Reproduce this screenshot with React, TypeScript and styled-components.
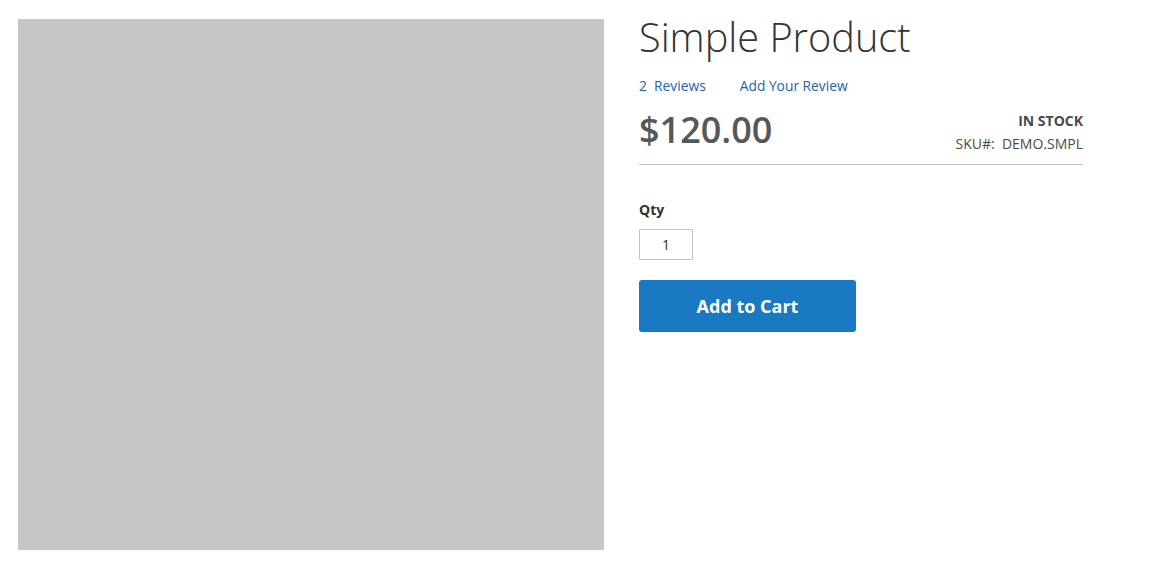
import React from "react";
import styled, { createGlobalStyle } from "styled-components";

const Global = createGlobalStyle`
  html, body { margin: 0; padding: 0; background: #fff; }
  body { font-family: "Open Sans", "Noto Sans", sans-serif; color: #333; }
`;

const Page = styled.div`
  display: flex;
  align-items: flex-start;
  padding: 19px 0 0 18px;
  gap: 35px;
`;

const Gallery = styled.div`
  width: 586px;
  height: 531px;
  background: #c6c6c6;
  flex-shrink: 0;
`;

const Info = styled.div`
  width: 444px;
  display: flex;
  flex-direction: column;
`;

const Title = styled.h1`
  margin: 0;
  font-weight: 300;
  font-size: 39.7px;
  line-height: 40px;
  color: #333;
  margin-top: -2px;
`;

const Reviews = styled.div`
  display: flex;
  gap: 34px;
  margin-top: 19px;
  font-size: 13.8px;
  line-height: 20px;
`;

const Link = styled.a`
  color: #1f62ad;
  text-decoration: none;
  white-space: pre;
`;

const PriceRow = styled.div`
  display: flex;
  justify-content: space-between;
  align-items: flex-start;
  margin-top: 14px;
  padding-bottom: 9px;
  border-bottom: 1px solid #c1c1c1;
`;

const Price = styled.div`
  font-size: 36px;
  font-weight: 600;
  color: #575757;
  line-height: 40px;
`;

const Stock = styled.div`
  display: flex;
  flex-direction: column;
  align-items: flex-end;
  font-size: 14px;
  line-height: 22px;
  color: #4a4a4a;
`;

const StockStatus = styled.div`
  font-weight: 700;
  text-transform: uppercase;
`;

const Sku = styled.div`
  white-space: pre;
  margin-top: 1px;
`;

const QtyLabel = styled.label`
  display: block;
  margin-top: 35px;
  font-size: 14px;
  font-weight: 700;
  line-height: 20px;
  color: #333;
`;

const QtyInput = styled.input`
  box-sizing: border-box;
  width: 54px;
  height: 31px;
  margin-top: 9px;
  border: 1px solid #c2c2c2;
  border-radius: 1px;
  text-align: center;
  font-family: "Open Sans", sans-serif;
  font-size: 14px;
  color: #333;
  padding: 0;
  outline: none;
`;

const CartButton = styled.button`
  width: 217px;
  height: 52px;
  margin-top: 20px;
  background: #1979c3;
  border: none;
  border-radius: 3px;
  color: #fff;
  font-family: "Open Sans", sans-serif;
  font-size: 18px;
  font-weight: 700;
  cursor: pointer;
`;

export default function App() {
  return (
    <>
      <Global />
      <Page>
        <Gallery />
        <Info>
          <Title>Simple Product</Title>
          <Reviews>
            <Link href="#">2  Reviews</Link>
            <Link href="#">Add Your Review</Link>
          </Reviews>
          <PriceRow>
            <Price>$120.00</Price>
            <Stock>
              <StockStatus>In stock</StockStatus>
              <Sku>SKU#:  DEMO.SMPL</Sku>
            </Stock>
          </PriceRow>
          <QtyLabel>Qty</QtyLabel>
          <QtyInput defaultValue="1" />
          <div>
            <CartButton>Add to Cart</CartButton>
          </div>
        </Info>
      </Page>
    </>
  );
}
